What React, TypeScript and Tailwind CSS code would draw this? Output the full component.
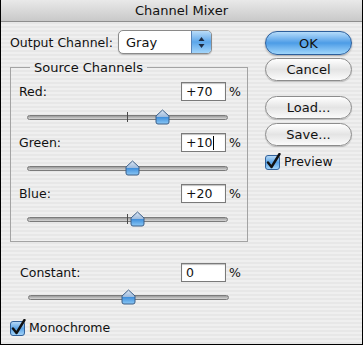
import React from "react";

const channels = [
  { label: "Red:", value: "+70", pct: 70, tick: true, caret: false },
  { label: "Green:", value: "+10", pct: 10, tick: false, caret: true },
  { label: "Blue:", value: "+20", pct: 20, tick: true, caret: false },
];

function Thumb() {
  return (
    <svg width="15" height="16" viewBox="0 0 15 16">
      <defs>
        <linearGradient id="thumbFill" x1="0" y1="0" x2="0" y2="1">
          <stop offset="0" stopColor="#dbe6f3" />
          <stop offset="0.5" stopColor="#9bb9dc" />
          <stop offset="0.52" stopColor="#3f8fdc" />
          <stop offset="1" stopColor="#8cc8f5" />
        </linearGradient>
      </defs>
      <path
        d="M7.5 1 L14 7 L14 13 Q14 15 12 15 L3 15 Q1 15 1 13 L1 7 Z"
        fill="url(#thumbFill)"
        stroke="#3b5e88"
        strokeWidth="1"
      />
    </svg>
  );
}

function Slider({ pct, tick }: { pct: number; tick: boolean }) {
  // value range is -200..+200
  const pos = ((pct + 200) / 400) * 201;
  return (
    <div className="relative ml-[17px] h-4 w-[201px]">
      <div className="absolute left-0 right-0 top-[6px] h-[5px] rounded-full border border-[#7b7b7b] bg-gradient-to-b from-[#9c9c9c] to-[#d6d6d6]" />
      {tick ? <div className="absolute left-[100px] top-[3px] h-[10px] w-px bg-[#4a4a4a]" /> : null}
      <div className="absolute top-0" style={{ left: pos - 7.5 }}>
        <Thumb />
      </div>
    </div>
  );
}

function ValueRow({ label, value, caret }: { label: string; value: string; caret?: boolean }) {
  return (
    <div className="flex items-center">
      <span className="flex-1">{label}</span>
      <div className="flex h-[19px] w-[45px] items-center border border-[#7a7a7a] bg-white pl-[4px] shadow-[inset_0_1px_1px_rgba(0,0,0,0.25)]">
        {value}
        {caret ? <span className="ml-px h-[14px] w-px bg-black" /> : null}
      </div>
      <span className="ml-[3px] w-[12px]">%</span>
    </div>
  );
}

function Checkbox({ label }: { label: string }) {
  return (
    <div className="flex items-center gap-[3px]">
      <svg width="16" height="17" viewBox="0 0 16 17">
        <defs>
          <linearGradient id="cbFill" x1="0" y1="0" x2="0" y2="1">
            <stop offset="0" stopColor="#bcdcf7" />
            <stop offset="0.5" stopColor="#5aa3e6" />
            <stop offset="1" stopColor="#a6d6fa" />
          </linearGradient>
        </defs>
        <rect x="0.5" y="2.5" width="14" height="14" rx="2.5" fill="url(#cbFill)" stroke="#32619a" />
        <path d="M3 9.5 L6.5 14 L14.5 1" fill="none" stroke="#111" strokeWidth="2.4" strokeLinecap="round" strokeLinejoin="round" />
      </svg>
      <span>{label}</span>
    </div>
  );
}

function AquaButton({ label, primary, className }: { label: string; primary?: boolean; className: string }) {
  return (
    <div
      className={`flex w-[87px] items-center justify-center rounded-full border text-[13px] ${
        primary
          ? "h-[24px] border-[#2d5f9c] bg-gradient-to-b from-[#b5dcfa] via-[#4c9ce6] to-[#9fd6fb] shadow-[0_1px_2px_rgba(0,0,0,0.3)]"
          : "h-[23px] border-[#8c8c8c] bg-gradient-to-b from-[#ffffff] via-[#e4e4e4] to-[#fbfbfb] shadow-[0_1px_1px_rgba(0,0,0,0.2)]"
      } ${className}`}
    >
      {label}
    </div>
  );
}

export default function App() {
  return (
    <div className="h-[345px] w-[363px] overflow-hidden border-x border-b border-black bg-[repeating-linear-gradient(180deg,#efefef_0px,#efefef_2px,#e7e7e7_2px,#e7e7e7_4px)] font-['DejaVu_Sans',sans-serif] text-[12.5px] leading-[15px] text-[#111]">
      <div className="h-[22px] border-b border-[#8e8e8e] bg-gradient-to-b from-[#e9e9e9] to-[#c9c9c9] text-center text-[13px] leading-[21px]">
        Channel Mixer
      </div>
      <div className="flex">
        <div className="w-[248px] pl-[9px] pt-[8px]">
          <div className="flex h-[24px] items-center">
            <span className="w-[108px]">Output Channel:</span>
            <div className="flex h-[24px] w-[94px] items-stretch overflow-hidden rounded-[5px] border border-[#8a8a8a] bg-white shadow-[0_1px_1px_rgba(0,0,0,0.2)]">
              <span className="flex flex-1 items-center pl-[7px] text-[13px]">Gray</span>
              <div className="flex w-[20px] items-center justify-center border-l border-[#5b84b6] bg-gradient-to-b from-[#b9dcf8] via-[#5ba6ea] to-[#a3d5fa]">
                <svg width="7" height="13" viewBox="0 0 7 13">
                  <path d="M3.5 1 L6.5 5 L0.5 5 Z" fill="#1d2c44" />
                  <path d="M3.5 12 L6.5 8 L0.5 8 Z" fill="#1d2c44" />
                </svg>
              </div>
            </div>
          </div>
          <fieldset className="mt-[6px] w-[238px] border border-[#a3a3a3] pb-[14px] pl-[8px] pr-[6px]">
            <legend className="ml-[11px] px-[4px] text-[13px]">Source Channels</legend>
            {channels.map((c, i) => (
              <div key={c.label} className={i === 0 ? "mt-[7px]" : "mt-[8px]"}>
                <ValueRow label={c.label} value={c.value} caret={c.caret} />
                <div className="mt-[8px] -ml-[9px]">
                  <Slider pct={c.pct} tick={c.tick} />
                </div>
              </div>
            ))}
          </fieldset>
          <div className="mt-[21px] w-[238px] pl-[10px] pr-[7px]">
            <ValueRow label="Constant:" value="0" />
          </div>
          <div className="mt-[7px] pl-[1px]">
            <Slider pct={0} tick={false} />
          </div>
          <div className="mt-[14px]">
            <Checkbox label="Monochrome" />
          </div>
        </div>
        <div className="flex flex-col pl-[16px] pt-[9px]">
          <AquaButton label="OK" primary className="" />
          <AquaButton label="Cancel" className="mt-[3px]" />
          <AquaButton label="Load..." className="mt-[15px]" />
          <AquaButton label="Save..." className="mt-[4px]" />
          <div className="mt-[7px]">
            <Checkbox label="Preview" />
          </div>
        </div>
      </div>
    </div>
  );
}
